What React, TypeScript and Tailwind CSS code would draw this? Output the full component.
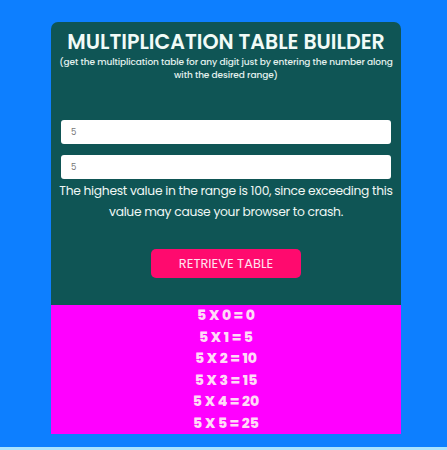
import React, { useState } from 'react';

export default function App() {
  const [num, setNum] = useState('5');
  const [range, setRange] = useState('5');
  const [rows, setRows] = useState<number[]>([0, 1, 2, 3, 4, 5]);

  const retrieve = () => {
    const r = Math.min(parseInt(range) || 0, 100);
    setRows(Array.from({ length: r + 1 }, (_, i) => i));
  };

  const n = parseInt(num) || 0;

  return (
    <div className="font-['Poppins','Inter',sans-serif]">
      <div className="h-[447px] bg-[#0d7fff] pt-[22px]">
        <div className="ml-[51px] w-[350px]">
          <div className="bg-[#0f5555] rounded-t-[7px] px-[10px] pt-[8px] h-[283px]">
            <h1 className="text-center text-[#f1fbf7] text-[20.5px] font-semibold leading-[24px]">
              MULTIPLICATION TABLE BUILDER
            </h1>
            <p className="-mx-[6px] text-center text-[#e3f1ee] text-[9px] font-medium leading-[13px] mt-[2px] tracking-[-0.1px]">
              (get the multiplication table for any digit just by entering the number along with the desired range)
            </p>
            <div className="mt-[38px] flex flex-col gap-[11px]">
              <input
                value={num}
                onChange={e => setNum(e.target.value)}
                className="h-[24px] w-full rounded-[3px] bg-white px-[10px] text-[8.5px] text-[#777] outline-none"
              />
              <input
                value={range}
                onChange={e => setRange(e.target.value)}
                className="h-[24px] w-full rounded-[3px] bg-white px-[10px] text-[8.5px] text-[#777] outline-none"
              />
            </div>
            <p className="-mx-[8px] text-center text-[#eef7f4] text-[12.3px] leading-[21px] mt-[1px] tracking-[-0.3px]">
              The highest value in the range is 100, since exceeding this value may cause your browser to crash.
            </p>
            <div className="flex justify-center mt-[27px]">
              <button
                onClick={retrieve}
                className="w-[150px] h-[29px] rounded-[5px] bg-[#ff0a6e] text-[#ffe3f0] text-[13px] font-normal"
              >
                RETRIEVE TABLE
              </button>
            </div>
          </div>
          <div className="bg-[#ff00ff] text-center text-[#ffd9f7] text-[14px] font-extrabold leading-[21.5px]">
            {rows.map(i => (
              <div key={i}>{n} X {i} = {n * i}</div>
            ))}
          </div>
        </div>
      </div>
      <div className="h-[3px] bg-[#a9e3ff]" />
    </div>
  );
}
